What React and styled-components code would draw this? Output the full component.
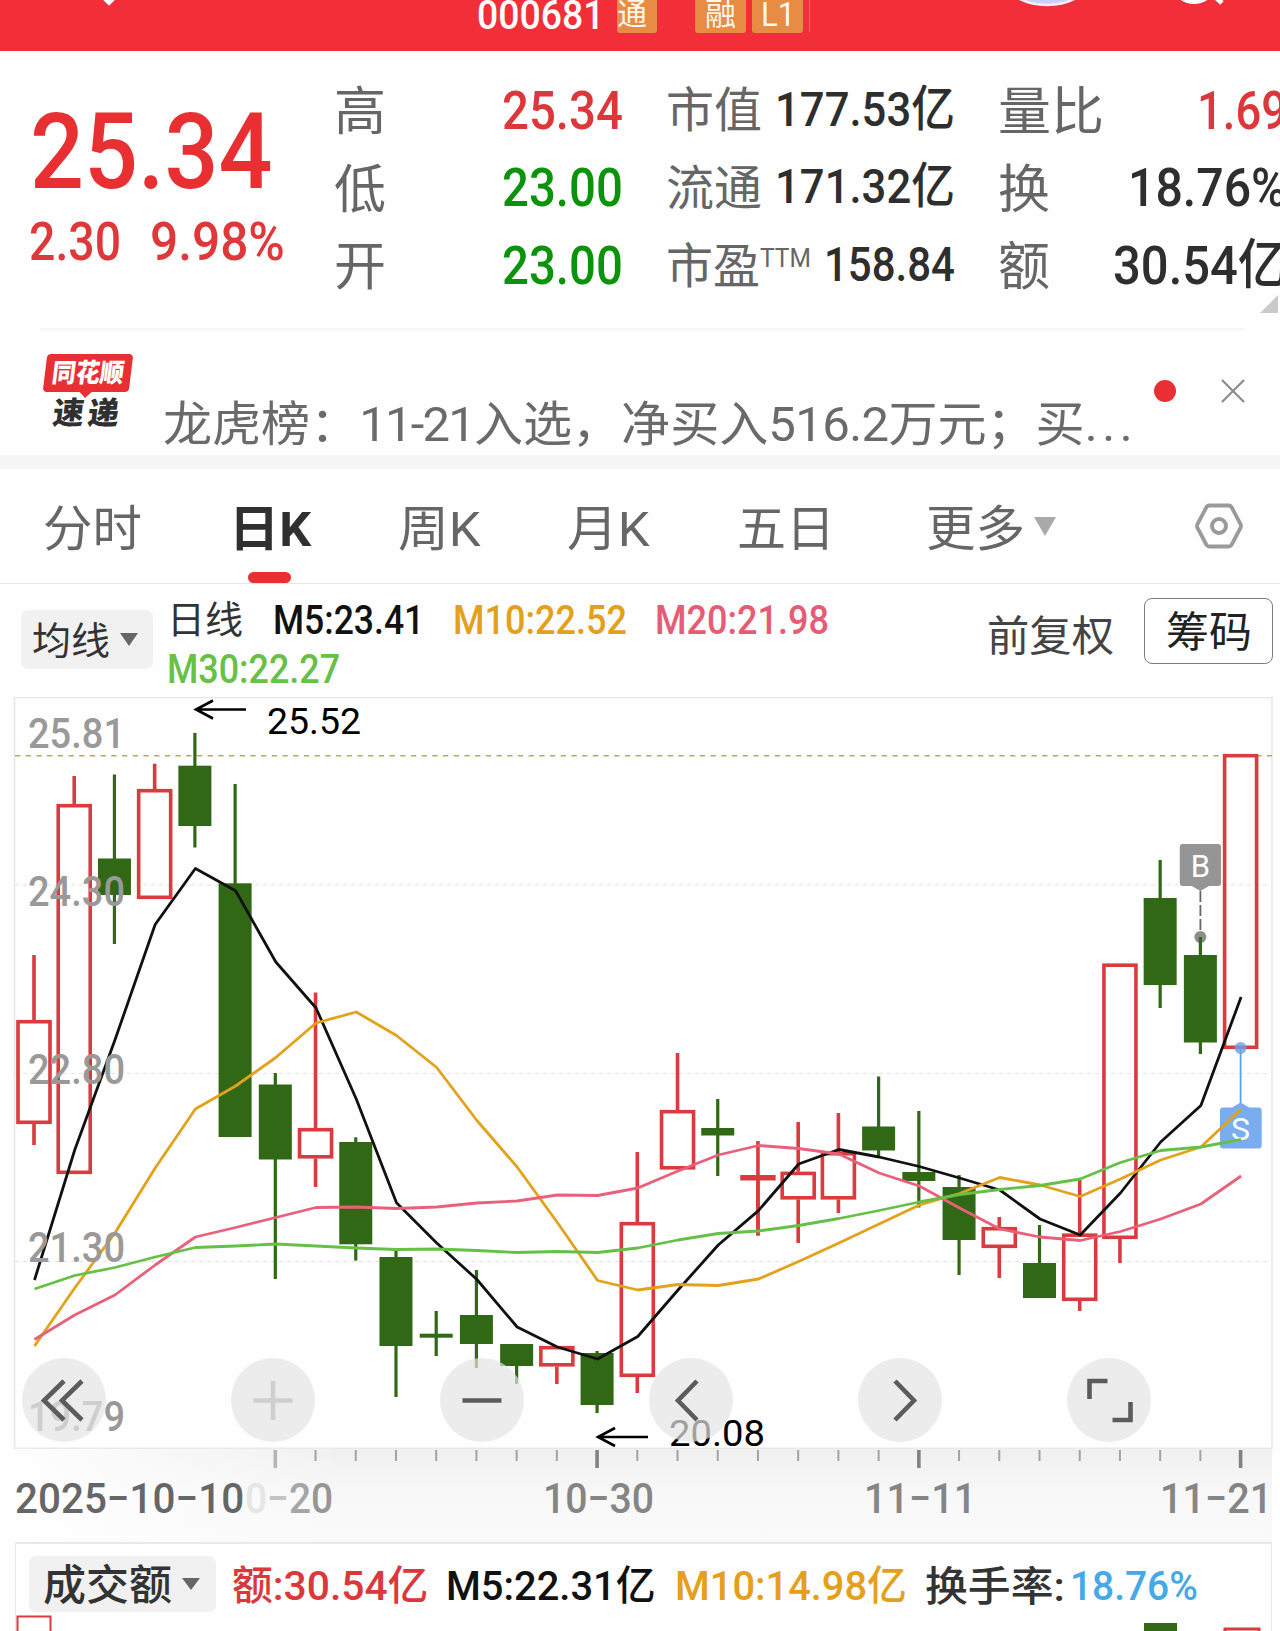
import { useLayoutEffect, useRef, useState } from 'react';
import styled, { createGlobalStyle } from 'styled-components';

const GlobalStyle = createGlobalStyle`
  * {
    box-sizing: border-box;
  }

  body {
    margin: 0;
    background-color: #fefefe;
    font-family: Roboto, 'Noto Sans CJK SC', sans-serif;
    color: #333333;
  }
`

/* ---------- text ---------- */

const TextBox = styled.span`
  display: block;
  flex: none;
  width: ${props => props.$width}px;
  height: ${props => props.$line || props.$size * 1.2}px;
  line-height: ${props => props.$line || props.$size * 1.2}px;
  font-size: ${props => props.$size}px;
  font-weight: ${props => props.$weight || 400};
  color: ${props => props.$color || 'inherit'};
  margin-left: ${props => props.$gap || 0}px;
  transform: translateY(${props => props.$drop || 0}px);
  white-space: nowrap;
`

const TextInner = styled.span`
  display: inline-block;
  transform-origin: 0 50%;
`

// Condenses its text so that it fills exactly the given width
const Text = ({ width, size, line, weight, color, gap, drop, children }) => {
  const inner = useRef(null);
  const [scale, setScale] = useState(1);

  useLayoutEffect(() => {
    setScale(width / inner.current.offsetWidth);
  }, [width]);

  return (
    <TextBox $width={width} $size={size} $line={line} $weight={weight} $color={color} $gap={gap} $drop={drop}>
      <TextInner ref={inner} style={{ transform: `scaleX(${scale})` }}>{children}</TextInner>
    </TextBox>
  );
}

const Spaced = styled.span`
  letter-spacing: ${props => props.$by}px;
`

const Page = styled.div`
  width: 1280px;
  height: 1631px;
  overflow: hidden;
  display: flex;
  flex-direction: column;
  background-color: #fefefe;
`

/* ---------- header ---------- */

const Header = styled.header`
  position: relative;
  flex: none;
  height: 51px;
  padding-left: 477px;
  display: flex;
  align-items: flex-start;
  overflow: hidden;
  background-color: #f22f38;
`

const HeaderArt = styled.svg`
  position: absolute;
  left: 0;
  top: 0;
`

const Tag = styled.div`
  height: 33px;
  width: ${props => props.$width}px;
  margin-left: ${props => props.$gap}px;
  display: flex;
  justify-content: ${props => props.$start ? 'flex-start' : 'center'};
  border-radius: 0 0 3px 3px;
  background-color: #e78b45;
  color: #fff6ec;
`

const TagEdge = styled.div`
  width: 1px;
  height: 32px;
  margin-left: 6px;
  background-color: #e97a43;
`

/* ---------- quote ---------- */

const Quote = styled.section`
  position: relative;
  flex: none;
  height: 277px;
  display: flex;
  overflow: hidden;
`

const PriceBlock = styled.div`
  width: 334px;
  padding: 55px 0 0 30px;
  flex: none;
`

const ChangeRow = styled.div`
  display: flex;
  margin-top: 14px;
`

const Stats = styled.div`
  display: flex;
  gap: 43px;
  padding-top: 20px;
`

const StatColumn = styled.div`
  width: 289px;
  flex: none;
`

const StatRow = styled.div`
  height: 77.8px;
  display: flex;
  align-items: center;
  justify-content: space-between;
`

const StatLabel = styled.div`
  display: flex;
  color: #666666;
`

const Corner = styled.svg`
  position: absolute;
  right: 2px;
  bottom: 15px;
`

const Divider = styled.div`
  flex: none;
  height: 2px;
  margin: 0 35px 0 40px;
  background-color: #f6f6f6;
`

/* ---------- news ---------- */

const News = styled.section`
  flex: none;
  height: 125px;
  display: flex;
  padding-left: 43px;
`

const Badge = styled.div`
  width: 91px;
  padding-top: 24px;
  flex: none;
`

const BadgeTop = styled.div`
  position: relative;
  width: 86px;
  height: 38px;
  margin-left: 2px;
  display: flex;
  align-items: center;
  justify-content: center;
  border-radius: 4px;
  background-color: #e83033;
  color: #ffffff;
  transform: skewX(-7deg);

  &::after {
    content: '';
    position: absolute;
    left: 37px;
    bottom: -6px;
    border: 6px solid transparent;
    border-top-color: #e83033;
    border-bottom: 0;
  }
`

const BadgeBottom = styled.div`
  display: flex;
  margin: 5px 0 0 10px;
  color: #303030;
  transform: skewX(-7deg);
`

const NewsText = styled.div`
  padding: 66px 0 0 29px;
`

const NewsActions = styled.div`
  display: flex;
  align-items: center;
  height: 22px;
  gap: 45px;
  margin: 50px 0 0 17px;
`

const Dot = styled.div`
  width: 22px;
  height: 22px;
  border-radius: 50%;
  background-color: #e92f33;
`

const Band = styled.div`
  flex: none;
  height: 14px;
  background-color: #f5f5f5;
`

/* ---------- tabs ---------- */

const Tabs = styled.nav`
  flex: none;
  height: 115px;
  display: flex;
  align-items: flex-start;
  padding-left: 43px;
  border-bottom: 1px solid #e6e6e6;
`

const Tab = styled.div`
  display: flex;
  flex-direction: column;
  align-items: center;
  height: 114px;
  padding-top: 30px;
  margin-left: ${props => props.$gap || 0}px;
  color: ${props => props.$active ? '#303030' : '#666666'};

  &::after {
    content: '';
    width: 43px;
    height: 11px;
    margin: 13px 1px 0 0;
    border-radius: 6px;
    background-color: ${props => props.$active ? '#e83033' : 'transparent'};
  }
`

const Caret = styled.div`
  width: 0;
  height: 0;
  flex: none;
  margin: ${props => props.$margin || 0};
  border: ${props => props.$w / 2}px solid transparent;
  border-top: ${props => props.$h}px solid ${props => props.$color};
  border-bottom: 0;
`

const Settings = styled.svg`
  margin: 33px 0 0 138px;
`

/* ---------- moving averages bar ---------- */

const Averages = styled.section`
  flex: none;
  height: 113px;
  display: flex;
  padding-left: 21px;
`

const Picker = styled.div`
  display: flex;
  align-items: center;
  flex: none;
  width: ${props => props.$width}px;
  height: ${props => props.$height}px;
  margin-top: ${props => props.$top}px;
  padding-left: ${props => props.$pad}px;
  border-radius: 7px;
  background-color: #f1f1f1;
`

const Legend = styled.div`
  display: flex;
  flex-wrap: wrap;
  align-content: flex-start;
  flex: none;
  width: 833px;
  padding: 11px 120px 0 14px;
`

const AdjustMode = styled.div`
  padding-top: 26px;
`

const ChipButton = styled.button`
  display: flex;
  align-items: center;
  justify-content: center;
  flex: none;
  width: 129px;
  height: 66px;
  margin: 14px 0 0 30px;
  padding: 0;
  border: 1.5px solid #7c7c7c;
  border-radius: 8px;
  background-color: transparent;
  font-family: inherit;
  color: #222222;
`

/* ---------- chart ---------- */

const Chart = styled.section`
  position: relative;
  flex: none;
  height: 752px;
`

const Plot = styled.svg`
  display: block;
  font-family: Roboto, sans-serif;
`

const Controls = styled.div`
  position: absolute;
  left: 21.5px;
  bottom: 7.5px;
  display: flex;
  gap: 125.2px;
`

const ControlButton = styled.div`
  width: 84px;
  height: 84px;
  border-radius: 50%;
  background-color: rgba(228, 228, 228, 0.7);

  svg {
    display: block;
    fill: none;
    stroke: ${props => props.$disabled ? '#cfcfcf' : '#5c5c5c'};
    stroke-width: 4.6;
  }
`

const Axis = styled.section`
  flex: none;
  height: 93px;
  margin: 0 8px 0 15px;
  background: linear-gradient(90deg, #fefefe 0, rgba(254, 254, 254, 0) 330px), linear-gradient(#f0f0f0, #f8f8f8 50%, #fafafa);
`

const Ticks = styled.svg`
  display: block;
`

const Dates = styled.div`
  display: flex;
  padding-top: 5px;
  color: #858585;
`

const Shade = styled.span`
  color: ${props => props.$color};
`

/* ---------- turnover ---------- */

const Turnover = styled.section`
  flex: none;
  height: 89px;
  margin: 0 8px 0 15px;
  border: solid #e9e9e9;
  border-width: 2px 1px 0;
  background-color: #fefefe;
`

const TurnoverLegend = styled.div`
  display: flex;
  height: 69px;
  padding-left: 13px;
`

const TurnoverValues = styled.div`
  display: flex;
  padding-top: 18px;
`

const UP = '#d93b3e';
const DOWN = '#306815';
const STEP = 40.22;
const xAt = i => 34 + i * STEP;

// [direction, body top, body bottom, wick top, wick bottom]
const candles = [
  ['up', 1020, 1124, 955, 1145],
  ['up', 804, 1174, 776, 1174],
  ['down', 858.5, 895, 774.5, 944],
  ['up', 789, 899, 763.7, 899],
  ['down', 765.7, 826, 733, 847.5],
  ['down', 883.3, 1137, 784, 1137],
  ['down', 1084.5, 1159.5, 1073, 1279],
  ['up', 1128, 1158.5, 992.5, 1187],
  ['down', 1142, 1244.3, 1137.3, 1260.6],
  ['down', 1257, 1346, 1251, 1397],
  ['down', 1333.7, 1337.7, 1311, 1356],
  ['down', 1315, 1344, 1270, 1368],
  ['down', 1344, 1366, 1344, 1384],
  ['up', 1346, 1366.5, 1346, 1384],
  ['down', 1353, 1405, 1351, 1413],
  ['up', 1222, 1377, 1152, 1393],
  ['up', 1110, 1169.5, 1053, 1169.5],
  ['down', 1128, 1135.5, 1099, 1176],
  ['up', 1175, 1180.5, 1141, 1235.5],
  ['up', 1171.7, 1199.5, 1122, 1243],
  ['up', 1152, 1199.5, 1113, 1213],
  ['down', 1126.5, 1150.5, 1076.5, 1157],
  ['down', 1172, 1181, 1111, 1207.5],
  ['down', 1187, 1240, 1175, 1275],
  ['up', 1227, 1248, 1217, 1278],
  ['down', 1263, 1298, 1225, 1298],
  ['up', 1233.5, 1301, 1180, 1311],
  ['up', 963.5, 1239, 963.5, 1263],
  ['down', 898, 985, 860, 1008],
  ['down', 955, 1042.5, 937, 1054],
  ['up', 754, 1049, 754, 1049],
];

const lines = [
  {
    color: '#111111',
    values: [1280, 1150, 1040, 924.5, 868.5, 890.7, 962, 1008, 1099, 1202.7, 1243, 1279.5, 1327, 1347, 1359, 1336.5,
      1290, 1245, 1210.6, 1164, 1149.5, 1157, 1166.5, 1178, 1190, 1219, 1235, 1193, 1142, 1105.5, 997],
  },
  {
    color: '#e4a11b',
    values: [1346, 1288, 1233, 1168, 1109, 1086, 1057.5, 1023, 1012, 1035.5, 1067.5, 1120.5, 1167, 1222.5, 1280.5, 1290,
      1284.5, 1285.5, 1279, 1261.5, 1243, 1224, 1205, 1193.5, 1177.5, 1185, 1196.5, 1179, 1160, 1147, 1109],
  },
  {
    color: '#e9607a',
    values: [1339.5, 1315, 1295, 1265, 1237, 1227.5, 1217.5, 1207.5, 1207, 1208.5, 1207, 1203, 1201, 1195, 1195.5, 1188,
      1171, 1155, 1145.5, 1148.5, 1154, 1173, 1186, 1208, 1229, 1237, 1240.5, 1231.5, 1219, 1204, 1176],
  },
  {
    color: '#65c046',
    values: [1289, 1275.5, 1267.5, 1257, 1247.5, 1246, 1244, 1246, 1248, 1249.5, 1249, 1250.5, 1252.5, 1251.5, 1252.5, 1248,
      1240, 1233.5, 1231, 1225.5, 1218.5, 1210.5, 1202, 1194.5, 1189.5, 1185.5, 1179, 1162.5, 1150.5, 1147, 1139.5],
  },
];

const priceLabels = [
  ['25.81', 748],
  ['24.30', 906],
  ['22.80', 1084],
  ['21.30', 1262],
  ['19.79', 1431],
];

const Candle = ({ x, data }) => {
  const [dir, top, bottom, high, low] = data;
  if (dir === 'down') {
    return (
      <g fill={DOWN}>
        <rect x={x - 1.6} y={high} width="3.2" height={low - high} />
        <rect x={x - 16.5} y={top} width="33" height={bottom - top} />
      </g>
    );
  }
  const flat = bottom - top < 8;
  return (
    <g fill={UP}>
      <rect x={x - 1.8} y={high} width="3.6" height={flat ? low - high : top - high} />
      <rect x={x - 1.8} y={bottom} width="3.6" height={low - bottom} />
      {flat
        ? <rect x={x - 17.7} y={top} width="35.4" height={bottom - top} />
        : <rect x={x - 16} y={top + 1.7} width="32" height={bottom - top - 3.4} fill="none" stroke={UP} strokeWidth="3.6" />}
    </g>
  );
}

const Arrow = ({ x, y }) => (
  <path d={`M${x + 51} ${y}H${x + 1}M${x + 18} ${y - 9}L${x + 1} ${y}L${x + 18} ${y + 9}`} fill="none" stroke="#000" strokeWidth="2.6" />
);

const CandleChart = () => (
  <Plot width="1280" height="752" viewBox="0 697 1280 752">
    <path d="M14.5 1449V697.5H1272V1449" fill="none" stroke="#e6e6e6" strokeWidth="1.5" />
    <path d="M15 1448.3H1272" stroke="#e9e9e9" strokeWidth="1.5" />
    {[885, 1073.5, 1261.5].map(y => (
      <path key={y} d={`M15 ${y}H1272`} stroke="#e2e2e2" strokeWidth="1.2" strokeDasharray="4 4" />
    ))}
    <path d="M15 755.7H1272" stroke="#b7a765" strokeWidth="1.6" strokeDasharray="5.3 5.4" />

    <circle cx={xAt(29)} cy="937" r="6" fill="#8d8d8d" />
    {candles.map((c, i) => <Candle key={i} x={xAt(i)} data={c} />)}

    <path d="M1200.4 891V933" stroke="#666666" strokeWidth="1.8" strokeDasharray="11 3" />
    <path d="M1183 844h35q3 0 3 3v36q0 3-3 3h-9l-8.600 5-8.600-5h-9q-3 0-3-3v-36q0-3 3-3z" fill="#959595" />
    <text x="1200.4" y="877" fontSize="31" textAnchor="middle" fill="#fff">B</text>

    <circle cx={xAt(30)} cy="1048" r="6" fill="#6f9fe6" fillOpacity="0.8" />
    <path d={`M${xAt(30)} 1048V1104`} stroke="#55a5ea" strokeWidth="1.8" />
    <path d="M1223 1107.500h9l8.600-5 8.600 5h9.500q3 0 3 3v35q0 3-3 3h-35.700q-3 0-3-3v-35q0-3 3-3z" fill="#7aadef" />
    <text x="1240.6" y="1140" fontSize="32" textAnchor="middle" fill="#fff">S</text>

    {lines.map(line => (
      <polyline
        key={line.color}
        points={line.values.map((y, i) => `${xAt(i) + 0.5},${y}`).join(' ')}
        fill="none"
        stroke={line.color}
        strokeWidth="2.8"
        strokeLinejoin="round"
      />
    ))}

    {priceLabels.map(([label, y]) => (
      <text key={label} x="28" y={y} fontSize="43" fontWeight="500" fill="#999999" textLength="97" lengthAdjust="spacingAndGlyphs">{label}</text>
    ))}

    <Arrow x={195} y={709.5} />
    <text x="267" y="733.500" fontSize="36" textLength="94" lengthAdjust="spacingAndGlyphs">25.52</text>
    <Arrow x={597} y={1437} />
    <text x="669" y="1445.500" fontSize="36" textLength="96" lengthAdjust="spacingAndGlyphs">20.08</text>
  </Plot>
);

const controls = [
  { name: 'first', d: 'M42 23L22 42.500L42 62M60 23L40 42.500L60 62' },
  { name: 'plus', d: 'M42 23V62M22.500 42.500H61.500', disabled: true },
  { name: 'minus', d: 'M22.500 42.500H61.500' },
  { name: 'prev', d: 'M48 23L29 42.500L48 62' },
  { name: 'next', d: 'M37 23L56 42.500L37 62' },
  { name: 'expand', d: 'M40.500 23H22.500V41M63.500 44V62H45.500' },
];

const tickIndexes = Array.from({ length: 25 }, (_, i) => i + 6);

export default function App() {
  return (
    <Page>
      <GlobalStyle />

      <Header>
        <HeaderArt width="1280" height="10" viewBox="0 0 1280 10">
          <path d="M103 -3L109 3L115 -3" fill="none" stroke="#fff" strokeWidth="4" />
          <circle cx="1047" cy="-58" r="63" fill="#ccd0f2" stroke="#f4eefb" strokeWidth="2.500" />
          <circle cx="1194" cy="-20" r="22" fill="none" stroke="#fff" strokeWidth="4" />
          <path d="M1212 -6L1222 3" stroke="#fff" strokeWidth="5" />
        </HeaderArt>
        <Text width={127} size={40} line={31} weight={500} color="#ffffff">000681</Text>
        <Tag $width={40} $gap={13} $start>
          <Text width={30} size={31} line={29}>通</Text>
        </Tag>
        <Tag $width={51} $gap={38}>
          <Text width={31} size={31} line={29}>融</Text>
        </Tag>
        <Tag $width={51} $gap={6}>
          <Text width={34} size={34} line={29}>L1</Text>
        </Tag>
        <TagEdge />
      </Header>

      <Quote>
        <PriceBlock>
          <Text width={242} size={106} line={93} weight={500} color="#e83033">25.34</Text>
          <ChangeRow>
            <Text width={92} size={54} line={58} weight={500} color="#df383b" gap={-1}>2.30</Text>
            <Text width={135} size={54} line={58} weight={500} color="#df383b" gap={29}>9.98%</Text>
          </ChangeRow>
        </PriceBlock>
        <Stats>
          <StatColumn>
            <StatRow>
              <StatLabel><Text width={52} size={52} drop={2.5}>高</Text></StatLabel>
              <Text width={121} size={54} weight={500} color="#dc383b" drop={1}>25.34</Text>
            </StatRow>
            <StatRow>
              <StatLabel><Text width={52} size={52} drop={2.5}>低</Text></StatLabel>
              <Text width={121} size={54} weight={500} color="#0b930b" drop={1}>23.00</Text>
            </StatRow>
            <StatRow>
              <StatLabel><Text width={52} size={52} drop={2.5}>开</Text></StatLabel>
              <Text width={121} size={54} weight={500} color="#0b930b" drop={1}>23.00</Text>
            </StatRow>
          </StatColumn>
          <StatColumn>
            <StatRow>
              <StatLabel><Text width={96} size={48} drop={1}>市值</Text></StatLabel>
              <Text width={180} size={49} weight={500} color="#2e2e2e">177.53亿</Text>
            </StatRow>
            <StatRow>
              <StatLabel><Text width={96} size={48} drop={1}>流通</Text></StatLabel>
              <Text width={180} size={49} weight={500} color="#2e2e2e">171.32亿</Text>
            </StatRow>
            <StatRow>
              <StatLabel>
                <Text width={94} size={48} drop={1}>市盈</Text>
                <Text width={51} size={26} line={40} drop={1}>TTM</Text>
              </StatLabel>
              <Text width={131} size={49} weight={500} color="#2e2e2e">158.84</Text>
            </StatRow>
          </StatColumn>
          <StatColumn>
            <StatRow>
              <StatLabel><Text width={106} size={52} drop={2.5}>量比</Text></StatLabel>
              <Text width={90} size={54} weight={500} color="#dc383b" drop={1}>1.69</Text>
            </StatRow>
            <StatRow>
              <StatLabel><Text width={52} size={52} drop={2.5}>换</Text></StatLabel>
              <Text width={159} size={54} weight={500} color="#2e2e2e" drop={1}>18.76%</Text>
            </StatRow>
            <StatRow>
              <StatLabel><Text width={52} size={52} drop={2.5}>额</Text></StatLabel>
              <Text width={174} size={54} weight={500} color="#2e2e2e" drop={1}>30.54亿</Text>
            </StatRow>
          </StatColumn>
        </Stats>
        <Corner width="18" height="18"><path d="M18 0V18H0z" fill="#cacaca" /></Corner>
      </Quote>
      <Divider />

      <News>
        <Badge>
          <BadgeTop><Text width={72} size={26} weight={900} drop={1}>同花顺</Text></BadgeTop>
          <BadgeBottom>
            <Text width={31} size={31} line={34} weight={900}>速</Text>
            <Text width={31} size={31} line={34} weight={900} gap={4}>递</Text>
          </BadgeBottom>
        </Badge>
        <NewsText>
          <Text width={974} size={48} color="#6a6a6a">
            龙虎榜：<Spaced $by={-1.8}>11-21</Spaced>入选，净买入<Spaced $by={-0.6}>516.2</Spaced>万元；买<Spaced $by={4.5}>...</Spaced>
          </Text>
        </NewsText>
        <NewsActions>
          <Dot />
          <svg width="24" height="24" viewBox="0 0 24 24">
            <path d="M1 1L23 23M23 1L1 23" stroke="#8c8c8c" strokeWidth="2.2" />
          </svg>
        </NewsActions>
      </News>
      <Band />

      <Tabs>
        <Tab><Text width={99} size={49} line={60} drop={0.5}>分时</Text></Tab>
        <Tab $gap={87} $active><Text width={82} size={49} line={60} weight={700} drop={0.5}>日K</Text></Tab>
        <Tab $gap={87}><Text width={83} size={49} line={60} drop={0.5}>周K</Text></Tab>
        <Tab $gap={86}><Text width={83} size={49} line={60} drop={0.5}>月K</Text></Tab>
        <Tab $gap={87}><Text width={98} size={49} line={60} drop={0.5}>五日</Text></Tab>
        <Tab $gap={91}><Text width={99} size={49} line={60} drop={0.5}>更多</Text></Tab>
        <Caret $w={22} $h={19} $color="#a9a9a9" $margin="48px 0 0 9px" />
        <Settings width="50" height="48" viewBox="0 0 50 48">
          <path d="M15.500 3.500H34.500Q36.500 3.500 37.500 5L46.500 22Q47.500 24 46.500 26L37.500 43Q36.500 44.500 34.500 44.500H15.500Q13.500 44.500 12.500 43L3.500 26Q2.500 24 3.500 22L12.500 5Q13.500 3.500 15.500 3.500Z" fill="none" stroke="#9a9a9a" strokeWidth="3.800" />
          <circle cx="25" cy="24" r="7" fill="none" stroke="#9a9a9a" strokeWidth="4" />
        </Settings>
      </Tabs>

      <Averages>
        <Picker $width={132} $height={59} $top={26} $pad={11}>
          <Text width={78} size={38} color="#333333" drop={2}>均线</Text>
          <Caret $w={19} $h={13} $color="#666666" $margin="0 0 0 10px" />
        </Picker>
        <Legend>
          <Text width={76} size={38} line={49} drop={1}>日线</Text>
          <Text width={151} size={40} line={49} weight={500} color="#111111" gap={30} drop={1}>M5:23.41</Text>
          <Text width={174} size={40} line={49} weight={500} color="#e4a01c" gap={29} drop={1}>M10:22.52</Text>
          <Text width={174} size={40} line={49} weight={500} color="#e75c75" gap={28} drop={1}>M20:21.98</Text>
          <Text width={173} size={40} line={49} weight={500} color="#66c146" drop={1}>M30:22.27</Text>
        </Legend>
        <AdjustMode><Text width={127} size={42} color="#444444" gap={1} drop={1.5}>前复权</Text></AdjustMode>
        <ChipButton><Text width={86} size={42} drop={2}>筹码</Text></ChipButton>
      </Averages>

      <Chart>
        <CandleChart />
        <Controls>
          {controls.map(control => (
            <ControlButton key={control.name} $disabled={control.disabled}>
              <svg width="84" height="84" viewBox="0 0 84 84"><path d={control.d} /></svg>
            </ControlButton>
          ))}
        </Controls>
      </Chart>

      <Axis>
        <Ticks width="1257" height="20" viewBox="15 1449 1257 20">
          {tickIndexes.map(i => {
            const major = i % 8 === 6;
            const width = major ? 3.6 : 2;
            return (
              <rect
                key={i}
                x={xAt(i) - width / 2}
                y="1450"
                width={width}
                height={major ? 18 : 11}
                fill={i === 6 ? '#b5b5b5' : major ? '#828282' : '#a3a3a3'}
              />
            );
          })}
        </Ticks>
        <Dates>
          <Text width={229} size={42} line={50} weight={500} color="#666666">2025−10−10</Text>
          <Text width={88} size={42} line={50} weight={500} gap={1}>
            <Shade $color="#e6e6e6">0</Shade>
            <Shade $color="#c4c4c4">−</Shade>
            <Shade $color="#a6a6a6">2</Shade>
            <Shade $color="#969696">0</Shade>
          </Text>
          <Text width={111} size={42} line={50} weight={500} gap={210}>10−30</Text>
          <Text width={112} size={42} line={50} weight={500} gap={210}>11−11</Text>
          <Text width={112} size={42} line={50} weight={500} gap={184}>11−21</Text>
        </Dates>
      </Axis>

      <Turnover>
        <TurnoverLegend>
          <Picker $width={187} $height={56} $top={12} $pad={14}>
            <Text width={129} size={42} weight={500} color="#333333" drop={2}>成交额</Text>
            <Caret $w={18} $h={12} $color="#666666" $margin="0 0 0 10px" />
          </Picker>
          <TurnoverValues>
            <Text width={196} size={41} weight={500} color="#db383b" gap={16}>额:30.54亿</Text>
            <Text width={210} size={41} weight={500} color="#111111" gap={18}>M5:22.31亿</Text>
            <Text width={232} size={41} weight={500} color="#e4a01c" gap={19}>M10:14.98亿</Text>
            <Text width={140} size={41} weight={500} color="#333333" gap={18} drop={0.5}>换手率:</Text>
            <Text width={128} size={41} weight={500} color="#45a9e7" gap={5}>18.76%</Text>
          </TurnoverValues>
        </TurnoverLegend>
        <svg width="1255" height="18" viewBox="16 1613 1255 18" display="block">
          <rect x="17.500" y="1616.500" width="33" height="30" fill="none" stroke={UP} strokeWidth="2" />
          <rect x="1144" y="1623" width="33" height="10" fill={DOWN} />
          <rect x="1225" y="1629" width="34" height="10" fill="none" stroke={UP} strokeWidth="3" />
        </svg>
      </Turnover>
    </Page>
  );
}
